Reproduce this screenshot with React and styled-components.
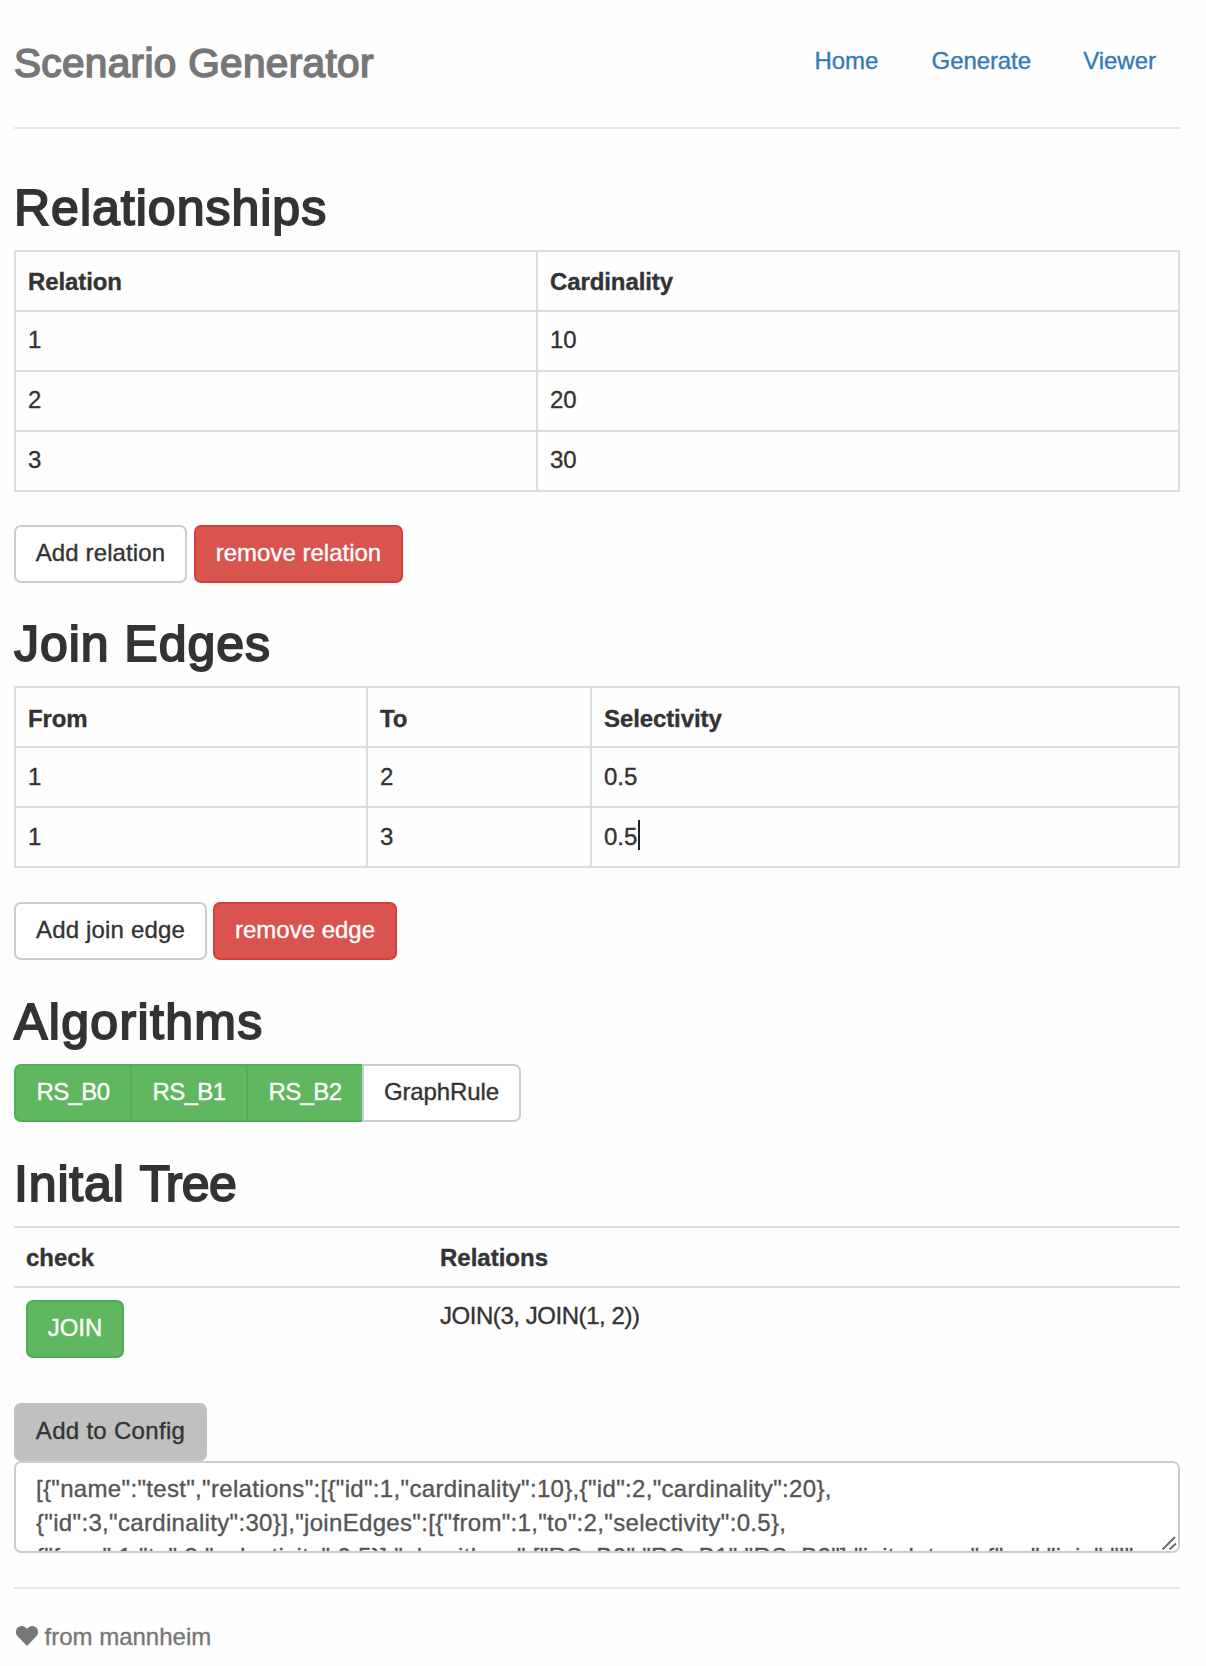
import React from 'react';
import styled, { createGlobalStyle, css } from 'styled-components';

const Global = createGlobalStyle`
  *, *::before, *::after { box-sizing: border-box; }
  body {
    margin: 0;
    background: #fefefe;
    color: #333;
    font-family: "Liberation Sans", Arial, Helvetica, sans-serif;
    font-size: 24px;
    line-height: 34px;
    -webkit-text-stroke: 0.35px currentColor;
  }
`;

const Page = styled.div`
  width: 1206px;
  height: 1666px;
  padding: 0 26px 0 14px;
  overflow: hidden;
  display: flex;
  flex-direction: column;
`;

const Header = styled.header`
  display: flex;
  justify-content: space-between;
  align-items: flex-start;
  height: 129px;
  padding-top: 40px;
  border-bottom: 2px solid #e5e5e5;
`;

const Brand = styled.h3`
  margin: 0;
  font-size: 40.5px;
  line-height: 46px;
  font-weight: 400;
  letter-spacing: 0.35px;
  color: #777;
  -webkit-text-stroke: 1.6px #777;
`;

const Nav = styled.nav`
  display: flex;
  gap: 4px;
  padding-top: 4px;
`;

const NavLink = styled.a`
  padding: 0 24.2px;
  color: #337ab7;
  letter-spacing: -0.08px;
  text-decoration: none;
  &:first-child { margin-right: 1px; }
`;

const Title = styled.h2`
  margin: ${p => p.$top}px 0 14px;
  font-size: 50px;
  line-height: 56px;
  font-weight: 400;
  letter-spacing: ${p => p.$spacing ?? 1}px;
  color: #333;
  -webkit-text-stroke: 1.9px #333;
`;

const Tight = styled.span`
  letter-spacing: ${p => p.$by}px;
`;

const Table = styled.table`
  width: 1166px;
  table-layout: fixed;
  border-collapse: separate;
  border-spacing: 0;
  flex: none;
  ${p => p.$bordered && css`
    border: solid #ddd;
    border-width: 2px 0 0 2px;
  `}
`;

const cell = css`
  height: 60px;
  text-align: left;
  vertical-align: top;
`;

const Th = styled.th`
  ${cell}
  padding: ${p => (p.$low ? '14px 12px 10px' : '13px 12px 11px')};
  font-weight: 700;
  letter-spacing: -0.1px;
  border: solid #ddd;
  border-width: 0 2px 2px 0;
`;

const Td = styled.td`
  ${cell}
  padding: ${p => (p.$low ? '12px 12px 12px' : '11px 12px 13px')};
  border: solid #ddd;
  border-width: 0 2px 2px 0;
`;

const TreeTh = styled.th`
  ${cell}
  height: 62px;
  padding: 13px 12px 11px;
  border: solid #ddd;
  border-width: 2px 0;
`;

const TreeTd = styled.td`
  ${cell}
  padding: ${p => (p.$action ? '12px 12px' : '11px 12px')};
  letter-spacing: ${p => (p.$action ? '0' : '-0.45px')};
`;

const Caret = styled.span`
  display: inline-block;
  width: 2px;
  height: 30px;
  margin: -3px 0 -5px 1px;
  vertical-align: baseline;
  background: #222;
`;

const tones = {
  default: css`background: #fff; border-color: #ccc; color: #333;`,
  danger: css`background: #d9534f; border-color: #d43f3a; color: #fff;`,
  success: css`background: #5fb760; border-color: #4fae51; color: #fff;`,
  muted: css`background: #c0c0c0; border-color: #c0c0c0; color: #333;`,
};

const Button = styled.button`
  display: block;
  flex: none;
  width: ${p => p.$w}px;
  height: 58px;
  margin: 0;
  padding: 9px 0 11px;
  border: 2px solid;
  border-radius: 7px;
  font: inherit;
  line-height: 34px;
  letter-spacing: ${p => p.$spacing ?? 0}px;
  text-align: center;
  white-space: nowrap;
  ${p => tones[p.$tone || 'default']}
`;

const Actions = styled.div`
  display: flex;
  gap: ${p => p.$gap}px;
  margin-top: ${p => p.$top}px;
`;

const ButtonGroup = styled.div`
  display: flex;
  & > button { border-radius: 0; }
  & > button + button { margin-left: -2px; }
  & > button:first-child { border-radius: 7px 0 0 7px; }
  & > button:last-child { border-radius: 0 7px 7px 0; }
`;

const ConfigRow = styled.div`
  margin-top: 33px;
`;

const ConfigBox = styled.div`
  position: relative;
  flex: none;
  height: 92px;
  padding: 9px 20px;
  overflow: hidden;
  border: 2px solid #ccc;
  border-radius: 7px;
  background: #fff;
  color: #555;
  letter-spacing: 0.33px;
  white-space: pre;
`;

const Grip = styled.svg`
  position: absolute;
  right: 1px;
  bottom: 1px;
  width: 16px;
  height: 16px;
`;

const Footer = styled.footer`
  display: flex;
  align-items: flex-start;
  gap: 6.5px;
  margin-top: 34px;
  padding: 31px 0 0 2px;
  border-top: 2px solid #e5e5e5;
  color: #777;
`;

const Heart = styled.svg`
  width: 22px;
  height: 20px;
  margin-top: 5.5px;
`;

const relations = [[1, 10], [2, 20], [3, 30]];
const edges = [[1, 2, '0.5'], [1, 3, '0.5']];
const config = [
  '[{"name":"test","relations":[{"id":1,"cardinality":10},{"id":2,"cardinality":20},',
  '{"id":3,"cardinality":30}],"joinEdges":[{"from":1,"to":2,"selectivity":0.5},',
  '{"from":1,"to":3,"selectivity":0.5}],"algorithms":["RS_B0","RS_B1","RS_B2"],"inital_tree":{"op":"join","l":',
].join('\n');

export default function App() {
  return (
    <Page>
      <Global />
      <Header>
        <Brand>Scenario Generator</Brand>
        <Nav>
          <NavLink>Home</NavLink>
          <NavLink>Generate</NavLink>
          <NavLink>Viewer</NavLink>
        </Nav>
      </Header>

      <Title $top={51}>Relationships</Title>
      <Table $bordered>
        <colgroup><col style={{ width: 522 }} /><col /></colgroup>
        <thead><tr><Th>Relation</Th><Th>Cardinality</Th></tr></thead>
        <tbody>
          {relations.map(([id, card]) => (
            <tr key={id}><Td>{id}</Td><Td>{card}</Td></tr>
          ))}
        </tbody>
      </Table>
      <Actions $top={33} $gap={7}>
        <Button $w={173} $spacing={0.12}>Add relation</Button>
        <Button $w={209} $tone="danger">remove relation</Button>
      </Actions>

      <Title $top={33} $spacing={0.95}>Join Edges</Title>
      <Table $bordered>
        <colgroup><col style={{ width: 352 }} /><col style={{ width: 224 }} /><col /></colgroup>
        <thead><tr><Th $low>From</Th><Th $low>To</Th><Th $low>Selectivity</Th></tr></thead>
        <tbody>
          {edges.map(([from, to, sel], i) => (
            <tr key={i}>
              <Td $low>{from}</Td>
              <Td $low>{to}</Td>
              <Td $low>{sel}{i === edges.length - 1 && <Caret />}</Td>
            </tr>
          ))}
        </tbody>
      </Table>
      <Actions $top={34} $gap={6}>
        <Button $w={193} $spacing={0.16}>Add join edge</Button>
        <Button $w={184} $tone="danger">remove edge</Button>
      </Actions>

      <Title $top={34} $spacing={1.35}>Algorithms</Title>
      <ButtonGroup>
        <Button $w={118} $spacing={-0.6} $tone="success">RS_B0</Button>
        <Button $w={118} $spacing={-0.6} $tone="success">RS_B1</Button>
        <Button $w={118} $spacing={-0.6} $tone="success">RS_B2</Button>
        <Button $w={159} $spacing={-0.1}>GraphRule</Button>
      </ButtonGroup>

      <Title $top={34}>
        <Tight $by={0.85}>Inital </Tight><Tight $by={-4.4}>T</Tight><Tight $by={-0.5}>ree</Tight>
      </Title>
      <Table>
        <colgroup><col style={{ width: 414 }} /><col /></colgroup>
        <thead><tr><TreeTh>check</TreeTh><TreeTh>Relations</TreeTh></tr></thead>
        <tbody>
          <tr>
            <TreeTd $action><Button $w={98} $tone="success">JOIN</Button></TreeTd>
            <TreeTd>JOIN(3, JOIN(1, 2))</TreeTd>
          </tr>
        </tbody>
      </Table>

      <ConfigRow>
        <Button $w={193} $spacing={0.3} $tone="muted">Add to Config</Button>
      </ConfigRow>
      <ConfigBox>
        {config}
        <Grip viewBox="0 0 16 16" fill="none" stroke="#666" strokeWidth="1.8">
          <path d="M1.500 15.500 14 3M8.500 15.500 15 9.500" />
        </Grip>
      </ConfigBox>

      <Footer>
        <Heart viewBox="0 0 22 20" fill="#777">
          <path d="M11 20 1.600 10.300C-.7 7.800-.5 3.800 1.800 1.600 4.500-.8 8.700-.5 11 3 13.300-.5 17.500-.8 20.200 1.600 22.500 3.800 22.700 7.800 20.400 10.300Z" />
        </Heart>
        <span>from mannheim</span>
      </Footer>
    </Page>
  );
}
